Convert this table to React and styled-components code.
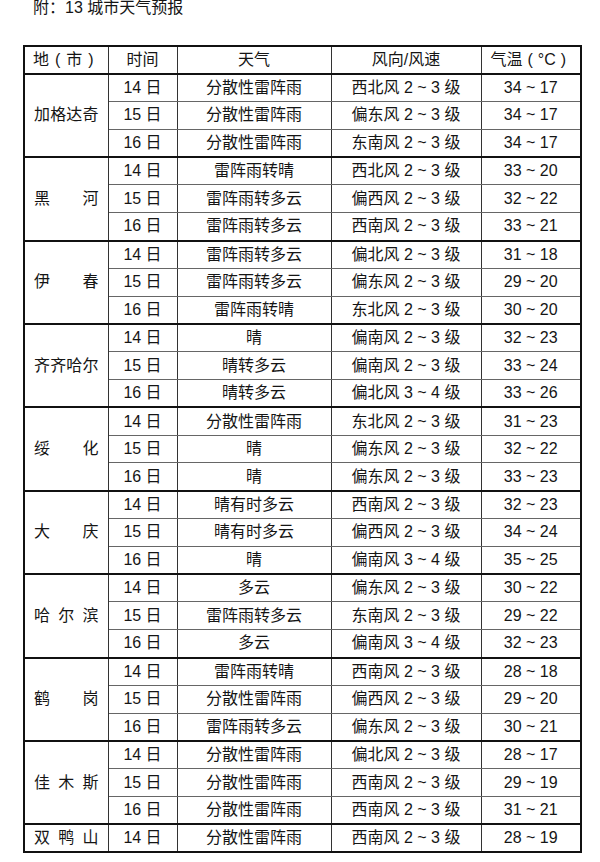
import React from 'react';
import styled, { createGlobalStyle } from 'styled-components';

const GlobalStyle = createGlobalStyle`
	body {
		margin: 0;
		background: #fff;
		color: #151515;
		font-family: "Liberation Sans", "Noto Sans CJK SC", sans-serif;
	}
`;

const Page = styled.div`
	width: 600px;
	height: 862px;
	overflow: hidden;
	padding: 0 0 0 23px;
	box-sizing: border-box;
`;
const Title = styled.h1`
	margin: -2px 0 0 10px;
	font-size: 16px;
	font-weight: normal;
	line-height: 20px;
`;
const Table = styled.table`
	margin-top: 27px;
	border-collapse: collapse;
	border: 2px solid #111;
	table-layout: fixed;
	width: 557px;
	font-size: 16px;
`;
const Row = styled.tr`
	height: 27.8px;
`;
const Cell = styled.td`
	border: 1px solid #666;
	border-left-color: #333;
	border-right-color: #333;
	border-top: ${props => props.$first ? '2px solid #111' : '1px solid #777'};
	padding: 0;
	text-align: center;
	vertical-align: middle;
	line-height: 20px;
	white-space: nowrap;
`;
const HeadCell = styled.th`
	border: 1px solid #333;
	border-bottom: 2px solid #111;
	padding: 0;
	font-weight: normal;
	text-align: center;
	line-height: 20px;
	white-space: nowrap;
`;
const Paren = styled.span`
	font-family: "Liberation Sans", sans-serif;
	margin: 0 ${props => props.$gap || 5}px;
`;
const CityCell = styled(Cell)`
	border-top: 2px solid #111;
	border-right: 1px solid #333;
	padding: 0 9px 0 9px;
	text-align: justify;
	text-align-last: justify;
`;

const data = [
	['加格达奇', [['分散性雷阵雨', '西北风 2 ~ 3 级', '34 ~ 17'], ['分散性雷阵雨', '偏东风 2 ~ 3 级', '34 ~ 17'], ['分散性雷阵雨', '东南风 2 ~ 3 级', '34 ~ 17']]],
	['黑河', [['雷阵雨转晴', '西北风 2 ~ 3 级', '33 ~ 20'], ['雷阵雨转多云', '偏西风 2 ~ 3 级', '32 ~ 22'], ['雷阵雨转多云', '西南风 2 ~ 3 级', '33 ~ 21']]],
	['伊春', [['雷阵雨转多云', '偏北风 2 ~ 3 级', '31 ~ 18'], ['雷阵雨转多云', '偏东风 2 ~ 3 级', '29 ~ 20'], ['雷阵雨转晴', '东北风 2 ~ 3 级', '30 ~ 20']]],
	['齐齐哈尔', [['晴', '偏南风 2 ~ 3 级', '32 ~ 23'], ['晴转多云', '偏南风 2 ~ 3 级', '33 ~ 24'], ['晴转多云', '偏北风 3 ~ 4 级', '33 ~ 26']]],
	['绥化', [['分散性雷阵雨', '东北风 2 ~ 3 级', '31 ~ 23'], ['晴', '偏东风 2 ~ 3 级', '32 ~ 22'], ['晴', '偏东风 2 ~ 3 级', '33 ~ 23']]],
	['大庆', [['晴有时多云', '西南风 2 ~ 3 级', '32 ~ 23'], ['晴有时多云', '偏西风 2 ~ 3 级', '34 ~ 24'], ['晴', '偏南风 3 ~ 4 级', '35 ~ 25']]],
	['哈尔滨', [['多云', '偏东风 2 ~ 3 级', '30 ~ 22'], ['雷阵雨转多云', '东南风 2 ~ 3 级', '29 ~ 22'], ['多云', '偏南风 3 ~ 4 级', '32 ~ 23']]],
	['鹤岗', [['雷阵雨转晴', '西南风 2 ~ 3 级', '28 ~ 18'], ['分散性雷阵雨', '偏西风 2 ~ 3 级', '29 ~ 20'], ['雷阵雨转多云', '偏东风 2 ~ 3 级', '30 ~ 21']]],
	['佳木斯', [['分散性雷阵雨', '偏北风 2 ~ 3 级', '28 ~ 17'], ['分散性雷阵雨', '西南风 2 ~ 3 级', '29 ~ 19'], ['分散性雷阵雨', '西南风 2 ~ 3 级', '31 ~ 21']]],
	['双鸭山', [['分散性雷阵雨', '西南风 2 ~ 3 级', '28 ~ 19']]],
];

const App = () => {
	return (
		<Page>
			<GlobalStyle />
			<Title>附：13 城市天气预报</Title>
			<Table>
				<colgroup>
					<col style={{ width: 84 }} />
					<col style={{ width: 69 }} />
					<col style={{ width: 154 }} />
					<col style={{ width: 150 }} />
					<col style={{ width: 100 }} />
				</colgroup>
				<thead>
					<Row>
						<HeadCell>地<Paren $gap={6}>(</Paren>市<Paren $gap={6}>)</Paren></HeadCell>
						<HeadCell>时间</HeadCell>
						<HeadCell>天气</HeadCell>
						<HeadCell>风向/风速</HeadCell>
						<HeadCell>气温<Paren>(</Paren>°C<Paren>)</Paren></HeadCell>
					</Row>
				</thead>
				<tbody>
					{data.map(([city, days]) =>
						days.map((d, i) => (
							<Row key={city + i}>
								{i === 0 && <CityCell rowSpan={days.length}>{city}</CityCell>}
								<Cell $first={i === 0}>{14 + i} 日</Cell>
								<Cell $first={i === 0}>{d[0]}</Cell>
								<Cell $first={i === 0}>{d[1]}</Cell>
								<Cell $first={i === 0}>{d[2]}</Cell>
							</Row>
						))
					)}
				</tbody>
			</Table>
		</Page>
	)
}

export default App
